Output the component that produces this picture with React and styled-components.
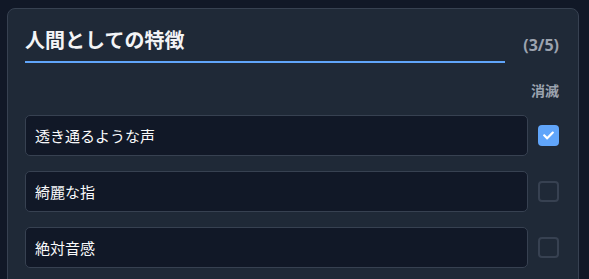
import React, { useState } from 'react'
import styled, { createGlobalStyle } from 'styled-components'
import { FaCheck } from 'react-icons/fa'

const GlobalStyle = createGlobalStyle`
    html, body {
        margin: 0;
        padding: 0;
        background: #111827;
        overflow: hidden;
    }
    body {
        font-family: "Noto Sans", "Noto Sans CJK JP", sans-serif;
    }
`;

const traits = [
    { label: '透き通るような声', gone: true },
    { label: '綺麗な指', gone: false },
    { label: '絶対音感', gone: false },
];

function App() {
    const [items, setItems] = useState(traits);

    const toggle = (index) => {
        setItems(items.map((item, i) => i === index ? { ...item, gone: !item.gone } : item));
    };

    return (
        <Page>
            <GlobalStyle />
            <Card>
                <Header>
                    <Title>人間としての特徴</Title>
                    <Count>(3/5)</Count>
                </Header>
                <ColumnLabel>消滅</ColumnLabel>
                <List>
                    {items.map((item, index) => (
                        <Row key={index}>
                            <Field defaultValue={item.label} />
                            <Check checked={item.gone} onClick={() => toggle(index)}>
                                {item.gone && <FaCheck size={11} color="#fff" />}
                            </Check>
                        </Row>
                    ))}
                </List>
            </Card>
        </Page>
    )
}

const Page = styled.div`
    padding: 8px 10px 0 7px;
`;

const Card = styled.div`
    background: #1f2937;
    border: 1px solid #374151;
    border-radius: 8px;
    padding: 17px 19px 20px 17px;
`;

const Header = styled.div`
    display: flex;
    align-items: center;
    gap: 18px;
`;

const Title = styled.h2`
    flex: 1;
    margin: 0;
    padding-bottom: 5px;
    border-bottom: 2px solid #60a5fa;
    color: #f3f4f6;
    font-size: 20px;
    font-weight: 700;
    line-height: 30px;
`;

const Count = styled.span`
    color: #9ca3af;
    font-size: 16px;
    font-weight: 700;
    line-height: 22px;
`;

const ColumnLabel = styled.div`
    margin-top: 17px;
    text-align: right;
    color: #9ca3af;
    font-size: 14px;
    font-weight: 700;
    line-height: 21px;
`;

const List = styled.div`
    margin-top: 14px;
    display: flex;
    flex-direction: column;
    gap: 15px;
`;

const Row = styled.div`
    display: flex;
    align-items: center;
    gap: 10px;
`;

const Field = styled.input`
    flex: 1;
    min-width: 0;
    height: 41px;
    box-sizing: border-box;
    padding: 0 9px;
    background: #111827;
    border: 1px solid #374151;
    border-radius: 5px;
    color: #f9fafb;
    font-family: inherit;
    font-size: 15px;
    outline: none;
`;

const Check = styled.span`
    width: 21px;
    height: 21px;
    box-sizing: border-box;
    flex-shrink: 0;
    display: flex;
    align-items: center;
    justify-content: center;
    border-radius: 4px;
    cursor: pointer;
    background: ${props => props.checked ? '#60a5fa' : 'transparent'};
    border: ${props => props.checked ? 'none' : '2px solid #374151'};
`;

export default App
